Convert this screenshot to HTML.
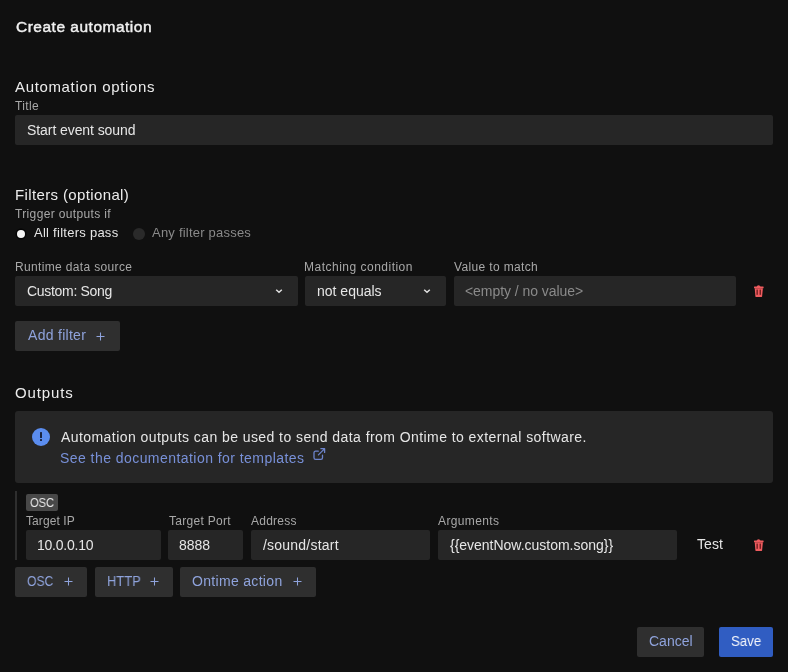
<!DOCTYPE html>
<html><head><meta charset="utf-8">
<style>
html,body{margin:0;padding:0;}
body{width:788px;height:672px;background:#101010;position:relative;overflow:hidden;font-family:"Liberation Sans",sans-serif;color:#e8e8e8;}
.a{position:absolute;}
.t{position:absolute;white-space:nowrap;line-height:1;will-change:transform;}
.inp{position:absolute;background:#262626;border-radius:2px;height:30px;}
.btn{position:absolute;background:#2f2f2f;border-radius:2px;height:30px;}
</style></head><body>
<div class="inp" style="left:15px;top:115px;width:758px;"></div>

<div class="a" style="left:17px;top:229.5px;width:8px;height:8px;border-radius:50%;background:#f4f4f4;box-shadow:0 0 0 1.5px #050505;"></div>
<div class="a" style="left:133px;top:228px;width:12px;height:12px;border-radius:50%;background:#2a2a2a;"></div>

<div class="inp" style="left:15px;top:276px;width:283px;"></div>
<svg class="a" style="left:275px;top:288px;" width="8" height="6" viewBox="0 0 8 6"><path d="M1.2 1.7 L4 4.3 L6.8 1.7" fill="none" stroke="#e0e0e0" stroke-width="1.5"/></svg>
<div class="inp" style="left:305px;top:276px;width:141px;"></div>
<svg class="a" style="left:423px;top:288px;" width="8" height="6" viewBox="0 0 8 6"><path d="M1.2 1.7 L4 4.3 L6.8 1.7" fill="none" stroke="#e0e0e0" stroke-width="1.5"/></svg>
<div class="inp" style="left:454px;top:276px;width:282px;"></div>
<svg class="a" style="left:753px;top:284px;" width="12" height="15" viewBox="0 0 12 15"><path d="M3.6 2.9 Q3.8 1.3 5.5 1.3 Q7.3 1.3 7.5 2.9 Z" fill="#ee5b5e"/><rect x="1" y="2.5" width="9.6" height="1.7" rx="0.5" fill="#ee5b5e"/><path d="M1.7 4.2 H9.9 L9.1 12.6 Q9 13 8.6 13 H2.9 Q2.5 13 2.4 12.6 Z" fill="#ee5b5e"/><rect x="3.5" y="5.6" width="1.3" height="5.2" fill="#6a1a1c"/><rect x="6.6" y="5.6" width="1.3" height="5.2" fill="#6a1a1c"/></svg>

<div class="btn" style="left:15px;top:321px;width:105px;"></div>
<svg class="a" style="left:96px;top:332px;" width="9" height="9" viewBox="0 0 9 9"><path d="M4.5 0.5v8M0.5 4.5h8" stroke="#8fa3dc" stroke-width="1.05"/></svg>

<div class="a" style="left:15px;top:411px;width:758px;height:72px;background:#262626;border-radius:3px;"></div>
<div class="a" style="left:32px;top:428px;width:18px;height:18px;border-radius:50%;background:#5b8def;"></div>
<div class="a" style="left:40.3px;top:432.4px;width:1.7px;height:5.6px;background:#1a2440;border-radius:0.5px;"></div>
<div class="a" style="left:40.3px;top:439.4px;width:1.7px;height:1.9px;background:#1a2440;border-radius:0.5px;"></div>
<svg class="a" style="left:312px;top:447px;" width="14" height="14" viewBox="0 0 14 14"><path d="M6.3 4.2H3.6Q2 4.2 2 5.8V10.7Q2 12.3 3.6 12.3H8.9Q10.5 12.3 10.5 10.7V8.2M6.4 7.9L12.4 1.9M8.9 1.7H12.6V5.4" fill="none" stroke="#6d84cc" stroke-width="1.3" stroke-linecap="round" stroke-linejoin="round"/></svg>

<div class="a" style="left:15px;top:491px;width:2px;height:69px;background:#2e2e2e;"></div>
<div class="a" style="left:26px;top:494px;width:32px;height:17px;background:#484848;border-radius:2px;"></div>
<div class="inp" style="left:26px;top:530px;width:135px;"></div>
<div class="inp" style="left:168px;top:530px;width:75px;"></div>
<div class="inp" style="left:251px;top:530px;width:179px;"></div>
<div class="inp" style="left:438px;top:530px;width:239px;"></div>
<svg class="a" style="left:753px;top:538px;" width="12" height="15" viewBox="0 0 12 15"><path d="M3.6 2.9 Q3.8 1.3 5.5 1.3 Q7.3 1.3 7.5 2.9 Z" fill="#ee5b5e"/><rect x="1" y="2.5" width="9.6" height="1.7" rx="0.5" fill="#ee5b5e"/><path d="M1.7 4.2 H9.9 L9.1 12.6 Q9 13 8.6 13 H2.9 Q2.5 13 2.4 12.6 Z" fill="#ee5b5e"/><rect x="3.5" y="5.6" width="1.3" height="5.2" fill="#6a1a1c"/><rect x="6.6" y="5.6" width="1.3" height="5.2" fill="#6a1a1c"/></svg>

<div class="btn" style="left:15px;top:567px;width:72px;"></div>
<svg class="a" style="left:64px;top:577px;" width="9" height="9" viewBox="0 0 9 9"><path d="M4.5 0.5v8M0.5 4.5h8" stroke="#8fa3dc" stroke-width="1.05"/></svg>
<div class="btn" style="left:95px;top:567px;width:78px;"></div>
<svg class="a" style="left:150px;top:577px;" width="9" height="9" viewBox="0 0 9 9"><path d="M4.5 0.5v8M0.5 4.5h8" stroke="#8fa3dc" stroke-width="1.05"/></svg>
<div class="btn" style="left:180px;top:567px;width:136px;"></div>
<svg class="a" style="left:293px;top:577px;" width="9" height="9" viewBox="0 0 9 9"><path d="M4.5 0.5v8M0.5 4.5h8" stroke="#8fa3dc" stroke-width="1.05"/></svg>

<div class="btn" style="left:637px;top:627px;width:67px;background:#2f2f2f;"></div>
<div class="a" style="left:719px;top:627px;width:54px;height:30px;background:#305dc2;border-radius:2px;"></div>
<div class="t" id="h_create" style="left:16.00px;top:19.00px;font-size:15.5px;color:#f0f0f0;letter-spacing:0.500px;-webkit-text-stroke:0.45px #f0f0f0;">Create automation</div>
<div class="t" id="h_autoopt" style="left:15.04px;top:79.00px;font-size:15px;color:#ececec;letter-spacing:0.653px;">Automation options</div>
<div class="t" id="l_title" style="left:14.90px;top:100.00px;font-size:12px;color:#a8a8a8;letter-spacing:0.358px;">Title</div>
<div class="t" id="i_title" style="left:27.00px;top:123.00px;font-size:14px;color:#e6e6e6;letter-spacing:-0.075px;">Start event sound</div>
<div class="t" id="h_filters" style="left:14.91px;top:187.00px;font-size:15px;color:#ececec;letter-spacing:0.369px;">Filters (optional)</div>
<div class="t" id="l_trigger" style="left:15.00px;top:208.00px;font-size:12px;color:#a8a8a8;letter-spacing:0.353px;">Trigger outputs if</div>
<div class="t" id="r_all" style="left:33.70px;top:226.00px;font-size:13px;color:#e6e6e6;letter-spacing:0.263px;">All filters pass</div>
<div class="t" id="r_any" style="left:152.04px;top:226.00px;font-size:13px;color:#8a8a8a;letter-spacing:0.217px;">Any filter passes</div>
<div class="t" id="l_runtime" style="left:14.56px;top:261.00px;font-size:12px;color:#a8a8a8;letter-spacing:0.343px;">Runtime data source</div>
<div class="t" id="l_matching" style="left:304.00px;top:261.00px;font-size:12px;color:#a8a8a8;letter-spacing:0.494px;">Matching condition</div>
<div class="t" id="l_value" style="left:454.00px;top:261.00px;font-size:12px;color:#a8a8a8;letter-spacing:0.354px;">Value to match</div>
<div class="t" id="i_custom" style="left:27.00px;top:284.00px;font-size:14px;color:#e6e6e6;letter-spacing:-0.309px;">Custom: Song</div>
<div class="t" id="i_noteq" style="left:317.10px;top:284.00px;font-size:14px;color:#e6e6e6;">not equals</div>
<div class="t" id="i_empty" style="left:465.00px;top:284.00px;font-size:14px;color:#8a8a8a;letter-spacing:-0.059px;">&lt;empty / no value&gt;</div>
<div class="t" id="b_addfilter" style="left:28.00px;top:328.00px;font-size:14px;color:#8fa3dc;letter-spacing:0.289px;">Add filter</div>
<div class="t" id="h_outputs" style="left:14.63px;top:385.00px;font-size:15px;color:#ececec;letter-spacing:0.860px;">Outputs</div>
<div class="t" id="i_info" style="left:60.50px;top:430.00px;font-size:14px;color:#e6e6e6;letter-spacing:0.432px;">Automation outputs can be used to send data from Ontime to external software.</div>
<div class="t" id="i_link" style="left:59.50px;top:451.00px;font-size:14px;color:#7890d8;letter-spacing:0.447px;">See the documentation for templates</div>
<div class="t" id="tag_osc" style="left:29.96px;top:496.00px;font-size:13px;color:#eaeaea;transform:scaleX(0.8570);transform-origin:0 0;">OSC</div>
<div class="t" id="l_tip" style="left:25.94px;top:515.00px;font-size:12px;color:#a8a8a8;letter-spacing:0.089px;">Target IP</div>
<div class="t" id="l_tport" style="left:169.00px;top:515.00px;font-size:12px;color:#a8a8a8;letter-spacing:0.300px;">Target Port</div>
<div class="t" id="l_addr" style="left:251.00px;top:515.00px;font-size:12px;color:#a8a8a8;letter-spacing:0.233px;">Address</div>
<div class="t" id="l_args" style="left:438.00px;top:515.00px;font-size:12px;color:#a8a8a8;letter-spacing:0.375px;">Arguments</div>
<div class="t" id="i_ip" style="left:37.00px;top:538.00px;font-size:14px;color:#e6e6e6;letter-spacing:-0.225px;">10.0.0.10</div>
<div class="t" id="i_port" style="left:179.20px;top:538.00px;font-size:14px;color:#e6e6e6;">8888</div>
<div class="t" id="i_addr" style="left:263.00px;top:538.00px;font-size:14px;color:#e6e6e6;letter-spacing:0.218px;">/sound/start</div>
<div class="t" id="i_args" style="left:449.70px;top:538.00px;font-size:14px;color:#e6e6e6;letter-spacing:-0.017px;">{{eventNow.custom.song}}</div>
<div class="t" id="i_test" style="left:696.70px;top:537.00px;font-size:14px;color:#e6e6e6;letter-spacing:0.067px;">Test</div>
<div class="t" id="b_osc" style="left:27.00px;top:574.00px;font-size:14px;color:#8fa3dc;transform:scaleX(0.8660);transform-origin:0 0;">OSC</div>
<div class="t" id="b_http" style="left:106.80px;top:574.00px;font-size:14px;color:#8fa3dc;transform:scaleX(0.9240);transform-origin:0 0;">HTTP</div>
<div class="t" id="b_ontime" style="left:192.20px;top:574.00px;font-size:14px;color:#8fa3dc;letter-spacing:0.317px;">Ontime action</div>
<div class="t" id="b_cancel" style="left:649.00px;top:634.00px;font-size:14px;color:#8fa3dc;">Cancel</div>
<div class="t" id="b_save" style="left:730.96px;top:634.00px;font-size:14px;color:#f4f6fb;transform:scaleX(0.9500);transform-origin:0 0;">Save</div>
</body></html>
